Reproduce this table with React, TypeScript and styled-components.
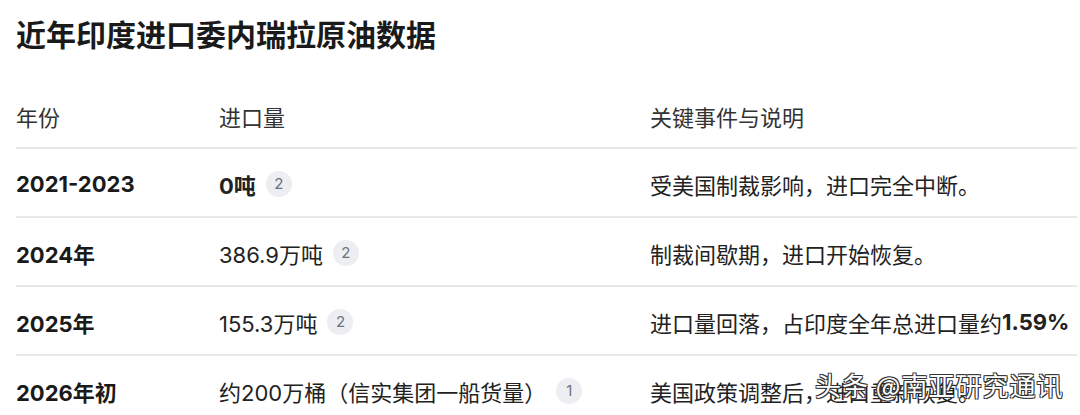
import React from "react";
import styled, { createGlobalStyle } from "styled-components";

type Row = {
  year: string;
  amount: string;
  amountBold?: boolean;
  cite: number;
  note: string;
  noteBold?: string;
};

const rows: Row[] = [
  { year: "2021-2023", amount: "0吨", amountBold: true, cite: 2, note: "受美国制裁影响，进口完全中断。" },
  { year: "2024年", amount: "386.9万吨", cite: 2, note: "制裁间歇期，进口开始恢复。" },
  { year: "2025年", amount: "155.3万吨", cite: 2, note: "进口量回落，占印度全年总进口量约", noteBold: "1.59%" },
  { year: "2026年初", amount: "约200万桶（信实集团一船货量）", cite: 1, note: "美国政策调整后，进口重新恢复。" },
];

const App: React.FC = () => {
  return (
    <Page>
      <Global />
      <Title>近年印度进口委内瑞拉原油数据</Title>
      <Table>
        <HeadRow>
          <HeadCell>年份</HeadCell>
          <HeadCell>进口量</HeadCell>
          <HeadCell>关键事件与说明</HeadCell>
        </HeadRow>
        {rows.map((r) => (
          <BodyRow key={r.year}>
            <YearCell>{r.year}</YearCell>
            <Cell>
              <Amount $bold={r.amountBold}>{r.amount}</Amount>
              <Cite>{r.cite}</Cite>
            </Cell>
            <Cell>
              {r.note}
              {r.noteBold ? <Strong>{r.noteBold}</Strong> : null}
            </Cell>
          </BodyRow>
        ))}
      </Table>
      <Watermark>头条 @南亚研究通讯</Watermark>
    </Page>
  );
};

export default App;

const Global = createGlobalStyle`
  html, body {
    margin: 0;
    padding: 0;
    background: #fff;
  }
  body {
    font-family: "Inter", "Noto Sans CJK SC", sans-serif;
    color: #1f1f1f;
  }
`;

const Page = styled.div`
  position: relative;
  width: 1080px;
  height: 415px;
  overflow: hidden;
  padding: 15px 3px 0 16px;
  box-sizing: border-box;
`;

const Title = styled.h1`
  margin: 0 0 28px 0;
  font-size: 30px;
  line-height: 40px;
  font-weight: 700;
  color: #1a1a1a;
`;

const Table = styled.div`
  display: flex;
  flex-direction: column;
`;

const HeadRow = styled.div`
  display: grid;
  grid-template-columns: 203px 431px 1fr;
  align-items: center;
  height: 66px;
  padding-top: 2px;
  border-bottom: 2px solid #e8e8e8;
  box-sizing: border-box;
`;

const BodyRow = styled(HeadRow)`
  height: 69px;
`;

const HeadCell = styled.div`
  font-size: 22px;
  font-weight: 400;
  color: #333;
`;

const Cell = styled.div`
  display: flex;
  align-items: center;
  font-size: 22px;
  color: #222;
  white-space: nowrap;
`;

const YearCell = styled(Cell)`
  font-weight: 700;
  color: #1a1a1a;
`;

const Amount = styled.span<{ $bold?: boolean }>`
  font-weight: ${(p) => (p.$bold ? 700 : 400)};
`;

const Strong = styled.span`
  font-weight: 700;
`;

const Cite = styled.span`
  display: inline-flex;
  align-items: center;
  justify-content: center;
  width: 26px;
  height: 26px;
  margin-left: 10px;
  border-radius: 50%;
  background: #eceef2;
  color: #6b7280;
  font-size: 15px;
`;

const Watermark = styled.div`
  position: absolute;
  left: 815px;
  top: 369px;
  font-family: "Noto Sans CJK SC", sans-serif;
  font-size: 26px;
  line-height: 32px;
  letter-spacing: 1px;
  color: #fff;
  text-shadow: 1px 1px 0 #333, -1px -1px 0 #333, 1px -1px 0 #333, -1px 1px 0 #333;
  white-space: nowrap;
`;
